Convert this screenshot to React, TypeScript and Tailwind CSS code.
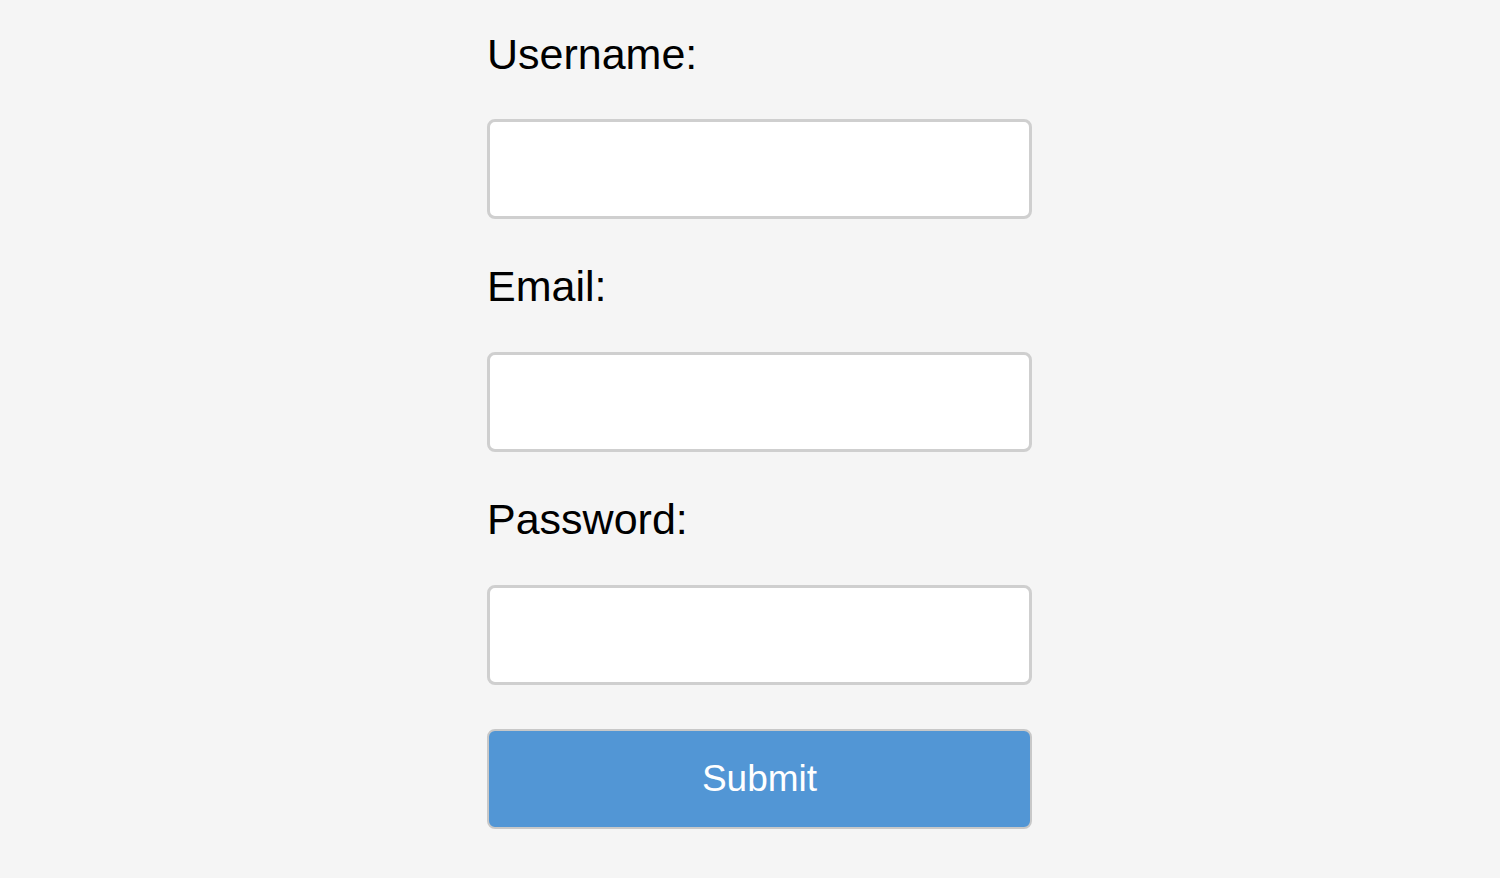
export default function App() {
  return (
    <div className="min-h-[878px] bg-[#f5f5f5] pl-[487px] pt-[30px] font-['Liberation_Sans',Arial,sans-serif]">
      <form className="flex w-[545px] flex-col" onSubmit={(e) => e.preventDefault()}>
        <label htmlFor="username" className="mb-[41px] block text-[43px] leading-[48px] text-black">
          Username:
        </label>
        <input
          id="username"
          type="text"
          className="mb-[43px] h-[100px] w-full rounded-[8px] border-[3px] border-[#cfcfcf] bg-white px-5 text-[36px] outline-none"
        />
        <label htmlFor="email" className="mb-[42px] block text-[43px] leading-[48px] text-black">
          Email:
        </label>
        <input
          id="email"
          type="email"
          className="mb-[43px] h-[100px] w-full rounded-[8px] border-[3px] border-[#cfcfcf] bg-white px-5 text-[36px] outline-none"
        />
        <label htmlFor="password" className="mb-[42px] block text-[43px] leading-[48px] text-black">
          Password:
        </label>
        <input
          id="password"
          type="password"
          className="mb-[44px] h-[100px] w-full rounded-[8px] border-[3px] border-[#cfcfcf] bg-white px-5 text-[36px] outline-none"
        />
        <button
          type="submit"
          className="h-[100px] w-full rounded-[8px] border-2 border-[#c8c8c8] bg-[#5296d5] text-[37px] text-white"
        >
          Submit
        </button>
      </form>
    </div>
  );
}
